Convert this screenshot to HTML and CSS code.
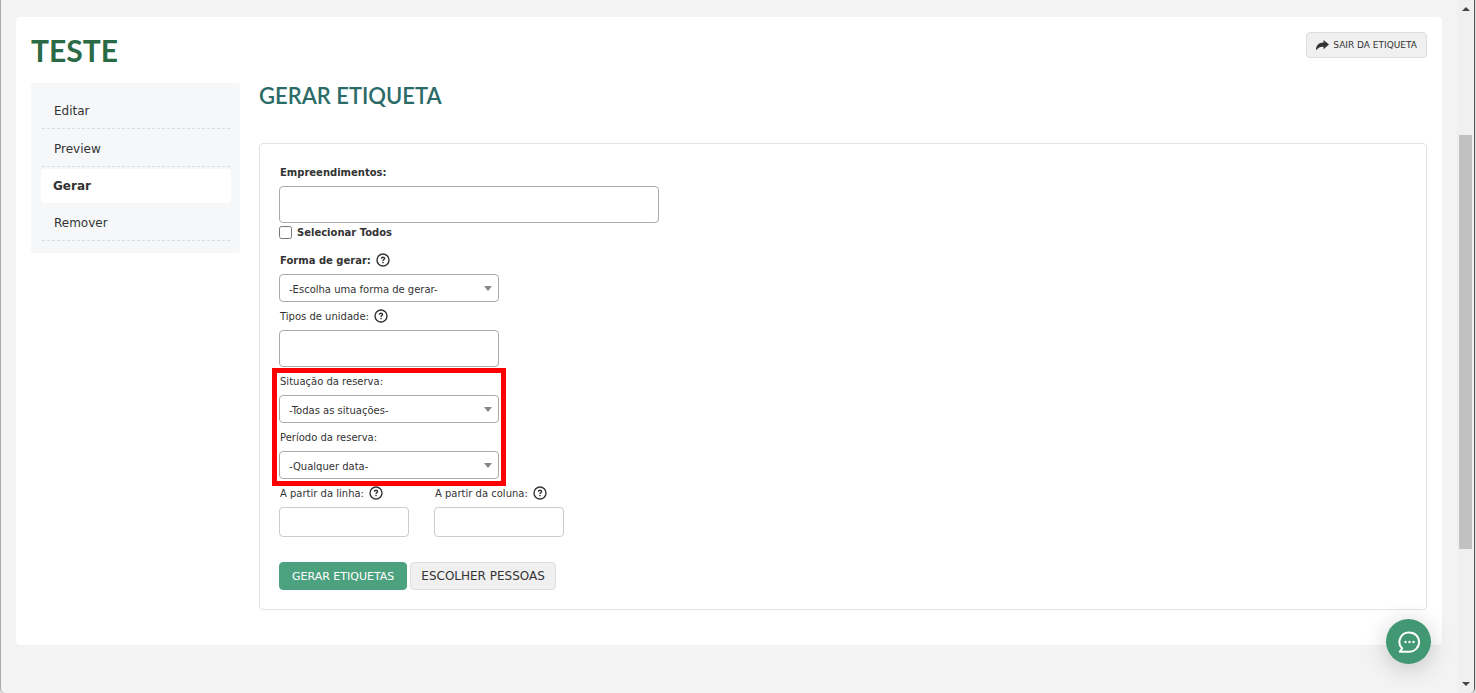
FILE: index.html
```
<!DOCTYPE html>
<html lang="pt-BR">
<head>
	<meta charset="UTF-8">
	<meta name="viewport" content="width=device-width, initial-scale=1">
	<title>Gerar etiqueta</title>
	<link rel="stylesheet" href="styles.css">
</head>
<body>
	<svg class="sprite" aria-hidden="true">
		<symbol id="help" viewBox="0 0 14 14">
			<circle cx="7" cy="7" r="6" fill="none" stroke="#333" stroke-width="1.4"/>
			<path d="M5.4 5.7C5.400 4.700 6.100 4.200 7 4.200s1.600.5 1.600 1.400S7 6.700 7 7.900" fill="none" stroke="#333" stroke-width="1.4"/>
			<circle cx="7" cy="9.6" r=".8" fill="#333"/>
		</symbol>
	</svg>
	<div class="window">
		<div class="page">
			<div class="card">
				<header class="top">
					<h1>TESTE</h1>
					<a class="btn btn-small" href="#">
						<svg width="13" height="10" viewBox="0 0 13 10"><path d="M7.500 0L13 4.600 7.500 9.200V6.700C4.500 6.500 2.300 7.200.8 9.800H0C0 5 3 2.500 7.500 2.400Z" fill="#333"/></svg>
						SAIR DA ETIQUETA
					</a>
				</header>
				<div class="content">
					<nav class="menu">
						<a href="#">Editar</a>
						<a href="#">Preview</a>
						<a href="#" class="active">Gerar</a>
						<a href="#">Remover</a>
					</nav>
					<main class="main">
						<h2>GERAR ETIQUETA</h2>
						<form class="form">
							<div class="field">
								<label class="bold" for="emp">Empreendimentos:</label>
								<input class="multi wide" id="emp" type="text">
							</div>
							<div class="check">
								<input type="checkbox" id="todos">
								<label for="todos">Selecionar Todos</label>
							</div>
							<div class="field">
								<label class="bold" for="forma">Forma de gerar: <svg class="help"><use href="#help"/></svg></label>
								<div class="select">
									<select id="forma"><option>-Escolha uma forma de gerar-</option></select>
								</div>
							</div>
							<div class="field">
								<label for="tipos">Tipos de unidade: <svg class="help"><use href="#help"/></svg></label>
								<input class="multi" id="tipos" type="text">
							</div>
							<div class="highlight">
								<div class="field">
									<label for="situacao">Situação da reserva:</label>
									<div class="select">
										<select id="situacao"><option>-Todas as situações-</option></select>
									</div>
								</div>
								<div class="field">
									<label for="periodo">Período da reserva:</label>
									<div class="select">
										<select id="periodo"><option>-Qualquer data-</option></select>
									</div>
								</div>
							</div>
							<div class="row">
								<div class="field">
									<label for="linha">A partir da linha: <svg class="help"><use href="#help"/></svg></label>
									<input class="short" id="linha" type="text">
								</div>
								<div class="field">
									<label for="coluna">A partir da coluna: <svg class="help"><use href="#help"/></svg></label>
									<input class="short" id="coluna" type="text">
								</div>
							</div>
							<div class="actions">
								<button class="btn btn-green" type="submit">GERAR ETIQUETAS</button>
								<button class="btn" type="button">ESCOLHER PESSOAS</button>
							</div>
						</form>
					</main>
				</div>
			</div>
		</div>
		<div class="scrollbar">
			<span class="arrow up"></span>
			<span class="thumb"></span>
			<span class="arrow down"></span>
		</div>
	</div>
	<button class="chat" type="button" aria-label="Chat">
		<svg width="22" height="22" viewBox="0 0 22 22">
			<path d="M11.500 1.500a9 9 0 1 1 0 19.200H1.800l2.400-3.200A9.400 9.400 0 0 1 11.500 1.500Z" fill="none" stroke="#fff" stroke-width="2" stroke-linejoin="round"/>
			<g fill="#fff"><circle cx="7.500" cy="11" r="1.200"/><circle cx="11.500" cy="11" r="1.200"/><circle cx="15.500" cy="11" r="1.200"/></g>
		</svg>
	</button>
</body>
</html>
```
FILE: styles.css
```
* {
	box-sizing: border-box;
}
body {
	margin: 0;
	background: #ddd;
	color: #333;
	font-family: Verdana, "DejaVu Sans", sans-serif;
	font-size: 10px;
}
.sprite {
	display: none;
}
h1, h2 {
	margin: 0;
	font-family: Lato, sans-serif;
}
h1 {
	color: #2a6b45;
	font-size: 30px;
	font-weight: 700;
	line-height: 36px;
}
h2 {
	color: #2b6b67;
	font-size: 22px;
	font-weight: 600;
	line-height: 26px;
}
a {
	color: inherit;
	text-decoration: none;
}

/* window */
.window {
	display: flex;
	height: 100vh;
	margin-right: 1px;
	border-left: 1px solid #aaa;
	border-right: 1px solid #555;
	border-radius: 0 0 5px 5px;
	background: #f3f3f3;
	overflow: hidden;
}
.page {
	flex: 1;
	padding: 17px 15px 0;
}
.card {
	padding: 15px 15px 35px;
	border-radius: 4px;
	background: #fff;
}
.top {
	display: flex;
	justify-content: space-between;
	align-items: flex-start;
	margin-bottom: 15px;
}
.content {
	display: flex;
	align-items: flex-start;
	gap: 19px;
}

/* side menu */
.menu {
	display: flex;
	flex: 0 0 209px;
	flex-direction: column;
	gap: 2px;
	padding: 10px 9px 12px 10px;
	border-radius: 4px;
	background: #f5f7f9;
	font-size: 12px;
	line-height: 37px;
}
.menu a {
	height: 36px;
	margin: 0 1px;
	padding-left: 12px;
	border-bottom: 1px dashed #ddd;
}
.menu .active {
	height: 34px;
	margin: 0;
	border: 0;
	border-radius: 4px;
	background: #fff;
	font-weight: bold;
	line-height: 34px;
}

/* form */
.main {
	flex: 1;
}
.form {
	margin-top: 34px;
	padding: 14px 19px 19px;
	border: 1px solid #e3e3e3;
	border-radius: 4px;
}
.field label {
	display: flex;
	align-items: center;
	gap: 5px;
	height: 28px;
	padding-left: 1px;
}
.field .bold {
	font-weight: bold;
}
.help {
	width: 14px;
	height: 14px;
}
.multi, .short, select {
	display: block;
	margin: 0;
	border: 1px solid #aaa;
	border-radius: 4px;
	background: #fff;
	color: #333;
	font: inherit;
}
.multi {
	width: 220px;
	height: 37px;
}
.wide {
	width: 380px;
}
.short {
	width: 130px;
	height: 30px;
	border-color: #ccc;
}
.check {
	display: flex;
	align-items: center;
	gap: 5px;
	height: 19px;
	margin-bottom: 4px;
	font-weight: bold;
}
.check input {
	width: 13px;
	height: 13px;
	margin: 0;
}
.select {
	position: relative;
	width: 220px;
}
.select select {
	width: 100%;
	height: 28px;
	padding: 2px 20px 0 9px;
	appearance: none;
}
.select:after {
	position: absolute;
	top: 12px;
	right: 7px;
	content: '';
	border: 4px solid transparent;
	border-top: 5px solid #888;
	border-bottom: 0;
	pointer-events: none;
}
.highlight {
	position: relative;
	width: 220px;
}
.highlight:after {
	position: absolute;
	top: 1px;
	right: -7px;
	bottom: -7px;
	left: -7px;
	content: '';
	border: 5px solid #f00;
	pointer-events: none;
}
.row {
	display: flex;
	gap: 25px;
}
.actions {
	display: flex;
	gap: 3px;
	margin-top: 25px;
}
.btn {
	height: 28px;
	padding: 0 10px;
	border: 1px solid #ddd;
	border-radius: 4px;
	background: #f0f0f0;
	color: #333;
	font-family: inherit;
	font-size: 12px;
}
.btn-green {
	padding: 0 12px;
	border-color: #4ca17e;
	background: #4ca17e;
	color: #fff;
	font-size: 11px;
}
.btn-small {
	display: flex;
	align-items: center;
	gap: 4px;
	height: 26px;
	padding: 0 9px;
	font-size: 9px;
}

/* scrollbar */
.scrollbar {
	display: flex;
	flex-direction: column;
	align-items: center;
	width: 17px;
	padding: 7px 2px;
	background: #f0f0f0;
}
.arrow {
	border: 4px solid transparent;
}
.up {
	border-top: 0;
	border-bottom-color: #444;
}
.down {
	margin-top: auto;
	border-bottom: 0;
	border-top-color: #444;
}
.thumb {
	width: 13px;
	height: 61%;
	margin-top: 124px;
	background: #c1c1c1;
}

.chat {
	position: fixed;
	right: 45px;
	bottom: 29px;
	display: flex;
	align-items: center;
	justify-content: center;
	width: 45px;
	height: 45px;
	padding: 0;
	border: 0;
	border-radius: 50%;
	background: #419873;
	box-shadow: 0 4px 24px rgba(0,0,0,0.2);
}
```
